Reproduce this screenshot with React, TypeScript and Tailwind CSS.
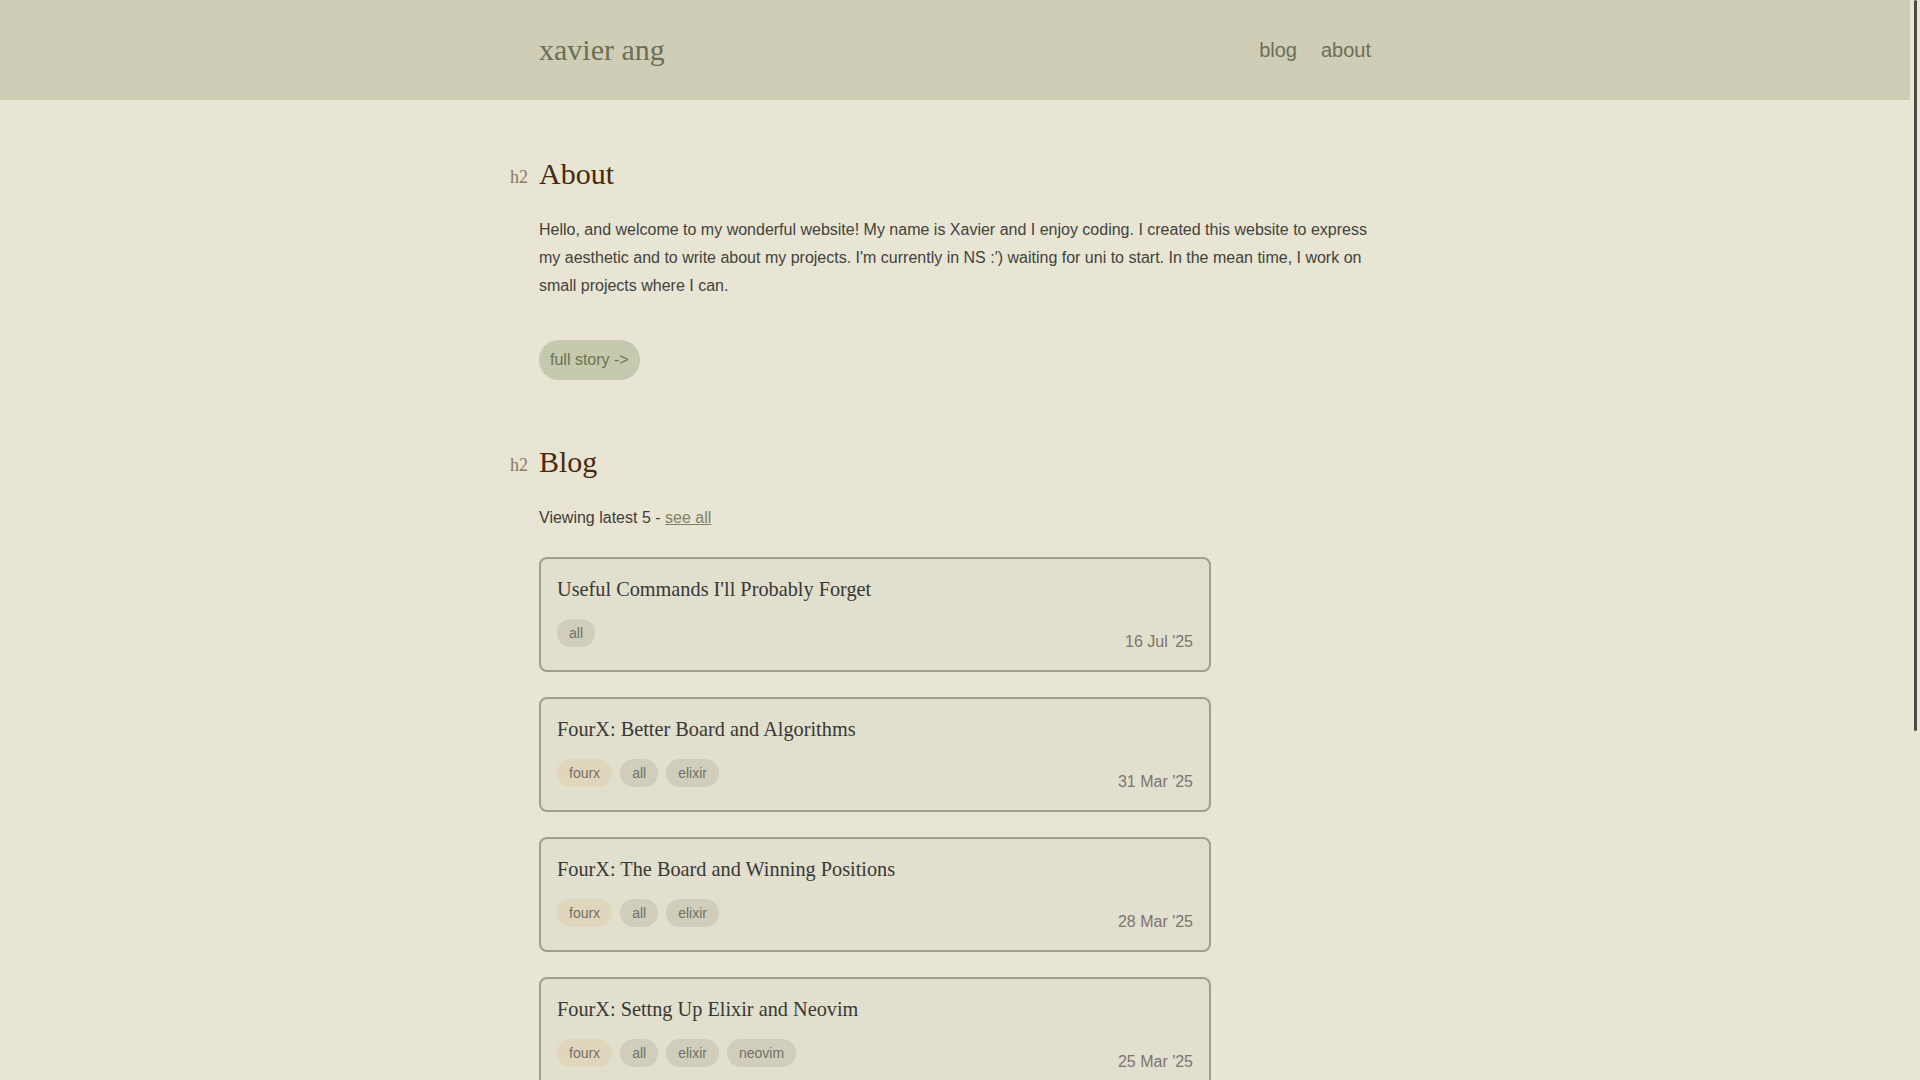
const serif = { fontFamily: '"Liberation Serif", "Times New Roman", serif' };

type Post = { title: string; tags: string[]; date: string };

const posts: Post[] = [
  { title: "Useful Commands I'll Probably Forget", tags: ["all"], date: "16 Jul '25" },
  { title: "FourX: Better Board and Algorithms", tags: ["fourx", "all", "elixir"], date: "31 Mar '25" },
  { title: "FourX: The Board and Winning Positions", tags: ["fourx", "all", "elixir"], date: "28 Mar '25" },
  { title: "FourX: Settng Up Elixir and Neovim", tags: ["fourx", "all", "elixir", "neovim"], date: "25 Mar '25" },
  { title: "FourX: A Connect Four Engine", tags: ["fourx", "all"], date: "22 Mar '25" },
];

function Heading({ children }: { children: React.ReactNode }) {
  return (
    <div className="flex items-baseline mb-6" style={serif}>
      <span className="-ml-[29px] mr-[11px] w-[18px] text-lg text-[#8b7a5e] -translate-y-[1px]">h2</span>
      <h2 className="text-3xl text-[#4a2a0c]">{children}</h2>
    </div>
  );
}

function Tag({ name }: { name: string }) {
  const bg = name === "fourx" ? "bg-[#e0d6bc]" : "bg-[#d0cebb]";
  return <span className={`${bg} rounded-full px-3 py-1 text-sm text-[#707068]`}>{name}</span>;
}

function PostCard({ post }: { post: Post }) {
  return (
    <a className="block bg-[#e1dfcd] border-2 border-[#a09e8c] rounded-lg p-4">
      <h3 className="text-[20.3px] leading-7 text-[#3a3835] mb-4" style={serif}>
        {post.title}
      </h3>
      <div className="flex justify-between">
        <div className="flex gap-2 self-start">
          {post.tags.map((t) => (
            <Tag key={t} name={t} />
          ))}
        </div>
        <span className="self-end pt-[11px] text-base leading-6 text-[#7f7370]">{post.date}</span>
      </div>
    </a>
  );
}

export default function App() {
  return (
    <div className="h-screen flex bg-[#e8e5d4]" style={{ fontFamily: '"Liberation Sans", Arial, sans-serif' }}>
      <div className="flex-1 overflow-y-auto">
        <header className="bg-[#d0cdb6] h-[100px]">
          <div className="max-w-[832px] mx-auto h-full flex items-center justify-between">
            <a className="text-3xl text-[#6b6f55]" style={serif}>
              xavier ang
            </a>
            <nav className="flex gap-6 text-xl text-[#6b6e56]">
              <a>blog</a>
              <a>about</a>
            </nav>
          </div>
        </header>

        <main className="max-w-[832px] mx-auto pt-14 pb-24 flex flex-col gap-16">
          <section>
            <Heading>About</Heading>
            <p className="text-base leading-7 text-[#42423b]">
              Hello, and welcome to my wonderful website! My name is Xavier and I enjoy coding. I created this website
              to express my aesthetic and to write about my projects. I'm currently in NS :') waiting for uni to start.
              In the mean time, I work on small projects where I can.
            </p>
            <a className="inline-block mt-10 bg-[#c5c9ad] text-[#6b7352] rounded-full px-[11px] py-2 text-base">
              full story -&gt;
            </a>
          </section>

          <section>
            <Heading>Blog</Heading>
            <p className="text-base leading-7 text-[#3f3d35]">
              Viewing latest 5 - <a className="underline text-[#7d8062]">see all</a>
            </p>
            <div className="mt-[25px] max-w-2xl flex flex-col gap-[25px]">
              {posts.map((p) => (
                <PostCard key={p.title} post={p} />
              ))}
            </div>
          </section>
        </main>
      </div>

      {/* scrollbar track */}
      <div className="w-[10px] shrink-0 flex flex-col items-center">
        <div className="w-[3px] h-[731px] rounded-full bg-[#4a4a44]" />
      </div>
    </div>
  );
}
